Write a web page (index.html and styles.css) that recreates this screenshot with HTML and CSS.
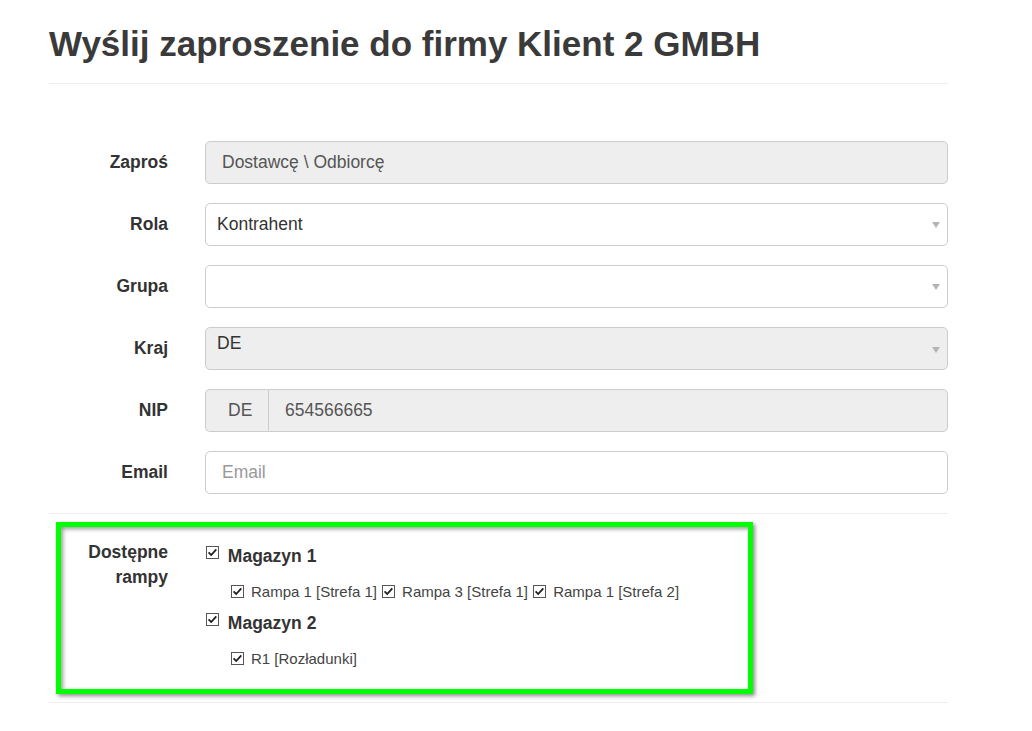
FILE: index.html
```html
<!DOCTYPE html>
<html lang="pl">
  <head>
    <meta charset="UTF-8" />
    <meta name="viewport" content="width=device-width, initial-scale=1.0" />
    <title>Wyślij zaproszenie</title>
    <link rel="stylesheet" href="styles.css">
  </head>
  <body>
    <div class="page">
      <h1 class="page-header">Wyślij zaproszenie do firmy Klient 2 GMBH</h1>

      <div class="form">
        <div class="form-row">
          <label class="form-label">Zaproś</label>
          <div class="field disabled pad-input">Dostawcę \ Odbiorcę</div>
        </div>
        <div class="form-row">
          <label class="form-label">Rola</label>
          <div class="field select">
            <span>Kontrahent</span>
            <span class="caret"></span>
          </div>
        </div>
        <div class="form-row">
          <label class="form-label">Grupa</label>
          <div class="field select">
            <span></span>
            <span class="caret"></span>
          </div>
        </div>
        <div class="form-row">
          <label class="form-label">Kraj</label>
          <div class="field select disabled top">
            <span>DE</span>
            <span class="caret"></span>
          </div>
        </div>
        <div class="form-row">
          <label class="form-label">NIP</label>
          <div class="input-group">
            <span class="addon">DE</span>
            <div class="field disabled pad-input joined">654566665</div>
          </div>
        </div>
        <div class="form-row">
          <label class="form-label">Email</label>
          <div class="field pad-input placeholder">Email</div>
        </div>
      </div>

      <div class="divider"></div>

      <div class="ramps-box">
        <label class="form-label ramps-label">Dostępne rampy</label>
        <div class="checklist">
          <div class="warehouse">
            <svg class="check" width="13" height="13" viewBox="0 0 13 13"><rect x="0.5" y="0.5" width="12" height="12" fill="#fff" stroke="#555"/><polyline points="2.6,6.3 5.2,9 10.3,3.4" fill="none" stroke="#1e1e1e" stroke-width="1.8"/></svg>
            Magazyn 1
          </div>
          <div class="ramps">
            <label class="ramp"><svg class="check" width="13" height="13" viewBox="0 0 13 13"><rect x="0.5" y="0.5" width="12" height="12" fill="#fff" stroke="#555"/><polyline points="2.6,6.3 5.2,9 10.3,3.4" fill="none" stroke="#1e1e1e" stroke-width="1.8"/></svg>Rampa 1 [Strefa 1]</label>
            <label class="ramp"><svg class="check" width="13" height="13" viewBox="0 0 13 13"><rect x="0.5" y="0.5" width="12" height="12" fill="#fff" stroke="#555"/><polyline points="2.6,6.3 5.2,9 10.3,3.4" fill="none" stroke="#1e1e1e" stroke-width="1.8"/></svg>Rampa 3 [Strefa 1]</label>
            <label class="ramp"><svg class="check" width="13" height="13" viewBox="0 0 13 13"><rect x="0.5" y="0.5" width="12" height="12" fill="#fff" stroke="#555"/><polyline points="2.6,6.3 5.2,9 10.3,3.4" fill="none" stroke="#1e1e1e" stroke-width="1.8"/></svg>Rampa 1 [Strefa 2]</label>
          </div>
          <div class="warehouse">
            <svg class="check" width="13" height="13" viewBox="0 0 13 13"><rect x="0.5" y="0.5" width="12" height="12" fill="#fff" stroke="#555"/><polyline points="2.6,6.3 5.2,9 10.3,3.4" fill="none" stroke="#1e1e1e" stroke-width="1.8"/></svg>
            Magazyn 2
          </div>
          <div class="ramps">
            <label class="ramp"><svg class="check" width="13" height="13" viewBox="0 0 13 13"><rect x="0.5" y="0.5" width="12" height="12" fill="#fff" stroke="#555"/><polyline points="2.6,6.3 5.2,9 10.3,3.4" fill="none" stroke="#1e1e1e" stroke-width="1.8"/></svg>R1 [Rozładunki]</label>
          </div>
        </div>
      </div>

      <div class="divider bottom"></div>
    </div>
  </body>
</html>
```

FILE: styles.css
```css
* {
  box-sizing: border-box;
}
body {
  margin: 0;
  background-color: #fff;
  font-family: "Liberation Sans", Arial, sans-serif;
  font-size: 17.5px;
  line-height: 25px;
  color: #333;
}
.page {
  width: 899px;
  margin-left: 49px;
  padding-top: 25px;
}

.page-header {
  margin: 0;
  padding-bottom: 19.5px;
  font-size: 35px;
  line-height: 38.5px;
  font-weight: bold;
  color: #3a3a3a;
  border-bottom: 1px solid #eee;
}

.form {
  margin-top: 57px;
}
.form-row {
  display: grid;
  grid-template-columns: 119px 1fr;
  column-gap: 37px;
  align-items: center;
  margin-bottom: 19px;
}
.form-label {
  text-align: right;
  font-weight: bold;
  color: #333;
}

.field {
  display: flex;
  align-items: center;
  height: 43px;
  padding: 0 11px;
  border: 1px solid #ccc;
  border-radius: 5px;
  background-color: #fff;
  color: #555;
}
.pad-input {
  padding: 0 16px;
}
.disabled {
  background-color: #eee;
}
.placeholder {
  color: #999;
}
.select {
  justify-content: space-between;
  padding-right: 7px;
  color: #333;
}
.select.top {
  align-items: flex-start;
  padding-top: 3px;
}
.select.top .caret {
  margin-top: 16px;
}
.caret {
  width: 0;
  height: 0;
  border-left: 4.5px solid transparent;
  border-right: 4.5px solid transparent;
  border-top: 6px solid #b4b4b4;
}

.input-group {
  display: flex;
}
.addon {
  display: flex;
  align-items: center;
  width: 63px;
  height: 43px;
  padding-left: 22px;
  border: 1px solid #ccc;
  border-right: 0;
  border-radius: 5px 0 0 5px;
  background-color: #eee;
  color: #555;
}
.joined {
  flex: 1;
  border-radius: 0 5px 5px 0;
}

.divider {
  border-top: 1px solid #eee;
  height: 1px;
}
.divider.bottom {
  margin-top: 8px;
}

.ramps-box {
  display: grid;
  grid-template-columns: 107px 1fr;
  column-gap: 37px;
  width: 697px;
  margin: 8px 0 0 7px;
  padding: 13px 0 11.3px;
  border: 5px solid #00ff00;
  box-shadow: 2px 2px 4px rgba(0, 0, 0, 0.45),
    inset 2px 2px 4px rgba(0, 0, 0, 0.4);
}
.ramps-label {
  align-self: start;
}
.checklist {
  padding-top: 3.7px;
}
.warehouse {
  font-weight: bold;
  color: #333;
}
.warehouse .check {
  margin-right: 4px;
}
.check {
  vertical-align: 3px;
  margin-left: 1px;
}
.ramps {
  margin: 12.6px 0 8px 25px;
  font-size: 15px;
  line-height: 21.4px;
  color: #444;
}
.ramp .check {
  margin-right: 7px;
  vertical-align: -1px;
}
```
